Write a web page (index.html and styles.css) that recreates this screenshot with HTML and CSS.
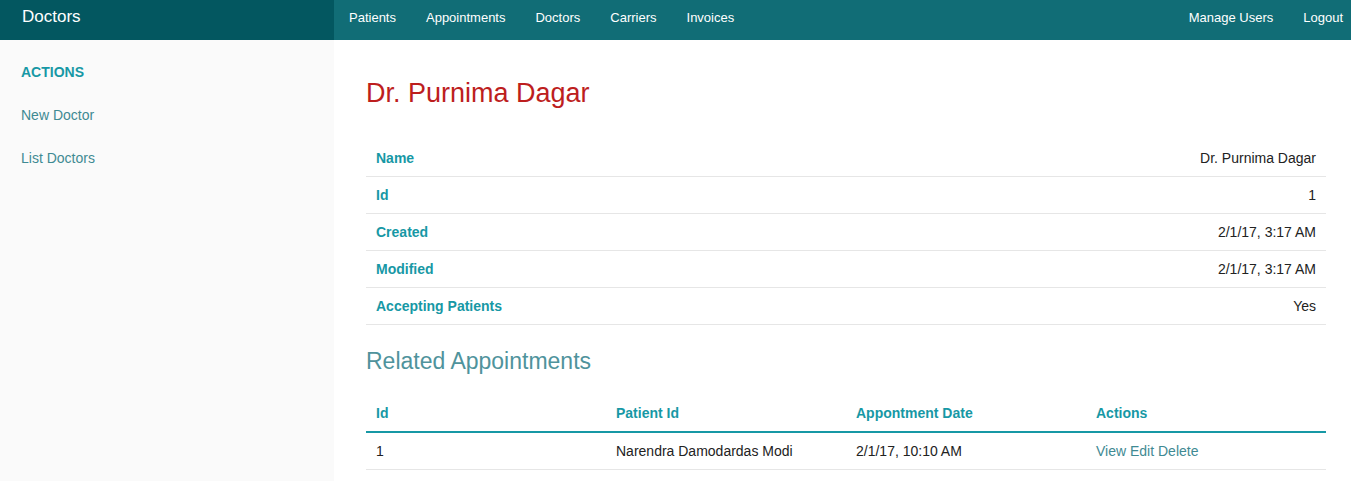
FILE: index.html
```html
<!DOCTYPE html>
<html lang="en">
<head>
<meta charset="utf-8">
<title>Doctors</title>
<link rel="stylesheet" href="styles.css">
</head>
<body>
<header class="topbar">
  <div class="title-area"><a class="brand" href="#">Doctors</a></div>
  <nav class="topnav">
    <ul class="nav-list">
      <li><a href="#">Patients</a></li>
      <li><a href="#">Appointments</a></li>
      <li><a href="#">Doctors</a></li>
      <li><a href="#">Carriers</a></li>
      <li><a href="#">Invoices</a></li>
    </ul>
    <ul class="nav-list nav-right">
      <li><a href="#">Manage Users</a></li>
      <li><a href="#">Logout</a></li>
    </ul>
  </nav>
</header>
<div class="layout">
  <aside class="sidebar">
    <ul class="side-nav">
      <li class="heading">Actions</li>
      <li><a href="#">New Doctor</a></li>
      <li><a href="#">List Doctors</a></li>
    </ul>
  </aside>
  <main class="content">
    <h3 class="page-title">Dr. Purnima Dagar</h3>
    <table class="vertical-table">
      <tr><th>Name</th><td>Dr. Purnima Dagar</td></tr>
      <tr><th>Id</th><td>1</td></tr>
      <tr><th>Created</th><td>2/1/17, 3:17 AM</td></tr>
      <tr><th>Modified</th><td>2/1/17, 3:17 AM</td></tr>
      <tr><th>Accepting Patients</th><td>Yes</td></tr>
    </table>
    <div class="related">
      <h4 class="related-title">Related Appointments</h4>
      <table class="related-table">
        <thead>
          <tr><th>Id</th><th>Patient Id</th><th>Appontment Date</th><th>Actions</th></tr>
        </thead>
        <tbody>
          <tr>
            <td>1</td>
            <td>Narendra Damodardas Modi</td>
            <td>2/1/17, 10:10 AM</td>
            <td class="actions"><a href="#">View</a> <a href="#">Edit</a> <a href="#">Delete</a></td>
          </tr>
        </tbody>
      </table>
    </div>
  </main>
</div>
</body>
</html>
```

FILE: styles.css
```css
* { box-sizing: border-box; }
html, body { margin: 0; padding: 0; }
body {
  font-family: "Liberation Sans", Arial, Helvetica, sans-serif;
  color: #222;
  background: #fff;
  font-size: 14px;
}
a { text-decoration: none; }

.topbar {
  display: flex;
  height: 40px;
  background: #116d76;
}
.title-area {
  width: 334px;
  flex: 0 0 334px;
  background: #035760;
  padding-left: 22px;
}
.brand {
  color: #fff;
  font-size: 17px;
  line-height: 34px;
}
.topnav {
  flex: 1;
  display: flex;
  justify-content: space-between;
}
.nav-list {
  list-style: none;
  margin: 0;
  padding: 0;
  display: flex;
}
.nav-list a {
  display: block;
  color: #fff;
  font-size: 13px;
  line-height: 35px;
  padding: 0 15px;
}
.nav-right { padding-right: 0; }
.nav-right li:last-child a { padding-right: 8px; }

.layout {
  display: flex;
  min-height: 441px;
}
.sidebar {
  width: 334px;
  flex: 0 0 334px;
  background: #fafafa;
}
.side-nav {
  list-style: none;
  margin: 0;
  padding: 23px 0 0 21px;
}
.side-nav li {
  line-height: 18px;
  margin-bottom: 25px;
  font-size: 14px;
}
.side-nav .heading {
  color: #1798a5;
  font-weight: bold;
  text-transform: uppercase;
}
.side-nav a { color: #3f8a93; }

.content {
  flex: 1;
  padding: 38px 25px 0 32px;
}
.page-title {
  margin: 0 0 31px;
  font-size: 27px;
  line-height: 31px;
  font-weight: normal;
  color: #bd1e1e;
}
table {
  width: 100%;
  border-collapse: collapse;
  border-spacing: 0;
}
th, td {
  padding: 9px 10px;
  font-size: 14px;
  line-height: 18px;
}
th { color: #1798a5; font-weight: bold; text-align: left; }
.vertical-table tr { border-bottom: 1px solid #e6e6e6; }
.vertical-table td { text-align: right; }

.related-title {
  margin: 22px 0 20px;
  font-size: 23px;
  line-height: 28px;
  font-weight: normal;
  color: #4f939c;
}
.related-table { table-layout: fixed; }
.related-table thead tr { border-bottom: 2px solid #1798a5; }
.related-table tbody tr { border-bottom: 1px solid #e6e6e6; }
.related-table td { text-align: left; }
.actions a { color: #3f8a93; }
```
